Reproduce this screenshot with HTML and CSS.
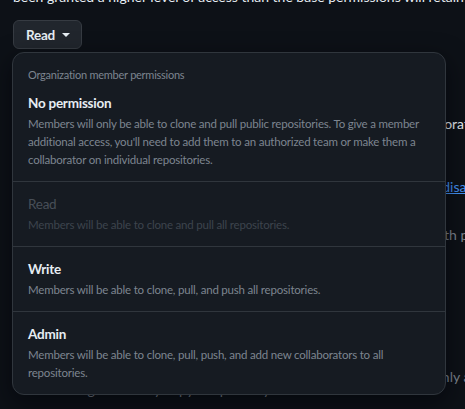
FILE: index.html
```html
<!DOCTYPE html>
<html lang="en">

<head>
    <meta charset="UTF-8">
    <meta name="viewport" content="width=device-width, initial-scale=1.0">
    <title>Base permissions</title>
    <link rel="stylesheet" href="styles.css">
</head>

<body>
    <div class="page">
        <p class="intro">been granted a higher level of access than the base permissions will retain their higher access.</p>

        <div class="picker">
            <button class="select-btn">
                Read
                <span class="caret"></span>
            </button>

            <div class="menu">
                <div class="menu-header">Organization member permissions</div>

                <div class="menu-item">
                    <div class="item-title">No permission</div>
                    <div class="item-desc">Members will only be able to clone and pull public repositories. To give a member additional access, you'll need to add them to an authorized team or make them a collaborator on individual repositories.</div>
                </div>

                <div class="menu-item disabled">
                    <div class="item-title">Read</div>
                    <div class="item-desc">Members will be able to clone and pull all repositories.</div>
                </div>

                <div class="menu-item">
                    <div class="item-title">Write</div>
                    <div class="item-desc">Members will be able to clone, pull, and push all repositories.</div>
                </div>

                <div class="menu-item">
                    <div class="item-title">Admin</div>
                    <div class="item-desc">Members will be able to clone, pull, push, and add new collaborators to all repositories.</div>
                </div>
            </div>
        </div>

        <!-- page content that sits behind the open menu -->
        <div class="behind">
            <p class="bg-heading">Repository creation for collaborators</p>
            <p class="bg-link"><a href="#">Enable or disable</a></p>
            <p class="bg-muted">Members with permissions</p>
            <p class="bg-muted low">Outside collaborators can only access</p>
            <p class="bg-muted last">Manage who may copy a repository.</p>
        </div>
    </div>
</body>

</html>
```

FILE: styles.css
```css
* {
    box-sizing: border-box;
    margin: 0;
    padding: 0;
}

body {
    background: #0d1117;
    color: #e6edf3;
    font-family: Lato, 'Liberation Sans', sans-serif;
    font-size: 14px;
    overflow: hidden;
    height: 409px;
}

.page {
    padding: 0 13px;
    width: 900px;
}

.intro {
    margin-top: -14px;
    line-height: 21px;
    white-space: nowrap;
}

.picker {
    position: relative;
    margin-top: 13px;
}

.select-btn {
    display: flex;
    align-items: center;
    gap: 7px;
    height: 29px;
    padding: 0 11px 0 12px;
    background: #21262d;
    color: #e6edf3;
    border: 1px solid #363b42;
    border-radius: 6px;
    font-family: inherit;
    font-size: 13.5px;
    letter-spacing: -0.25px;
    font-weight: 700;
}

.caret {
    width: 0;
    height: 0;
    border-left: 4px solid transparent;
    border-right: 4px solid transparent;
    border-top: 4px solid #e6edf3;
}

.menu {
    position: absolute;
    top: 32px;
    left: -1px;
    z-index: 10;
    width: 434px;
    background: #161b22;
    border: 1px solid #30363d;
    border-radius: 12px;
    box-shadow: 0 8px 24px rgba(1, 4, 9, 0.6);
}

.menu-header {
    padding: 14px 15px 0;
    font-size: 11px;
    letter-spacing: -0.25px;
    line-height: 15px;
    color: #7d8590;
}

.menu-item {
    padding: 12px 15px;
    border-top: 1px solid #30363d;
}

.menu-item:nth-child(2) {
    border-top: none;
    padding-top: 11px;
}

.item-title {
    font-size: 13.5px;
    letter-spacing: -0.25px;
    font-weight: 700;
    line-height: 20px;
    color: #e6edf3;
}

.item-desc {
    margin-top: 2px;
    font-size: 11.5px;
    letter-spacing: -0.2px;
    line-height: 18px;
    color: #7d8590;
}

.disabled .item-title {
    color: #484f58;
    font-weight: 400;
}

.disabled .item-desc {
    color: #3d444d;
}

/* lines behind the menu: right-aligned so only their tails peek out */
.behind {
    width: 472px;
    padding-top: 64px;
    white-space: nowrap;
    line-height: 21px;
    text-align: right;
}

.bg-heading {
    color: #e6edf3;
    margin-right: -3px;
}

.bg-link {
    margin-top: 42px;
    margin-right: 0;
}

.bg-link a {
    color: #4493f8;
}

.bg-muted {
    margin-top: 27px;
    color: #7d8590;
    margin-right: -48px;
}

.bg-muted.low {
    margin-top: 121px;
    margin-right: -18px;
}

.bg-muted.last {
    margin-top: -8px;
    margin-right: 0;
    text-align: left;
    padding-left: 40px;
}
```
